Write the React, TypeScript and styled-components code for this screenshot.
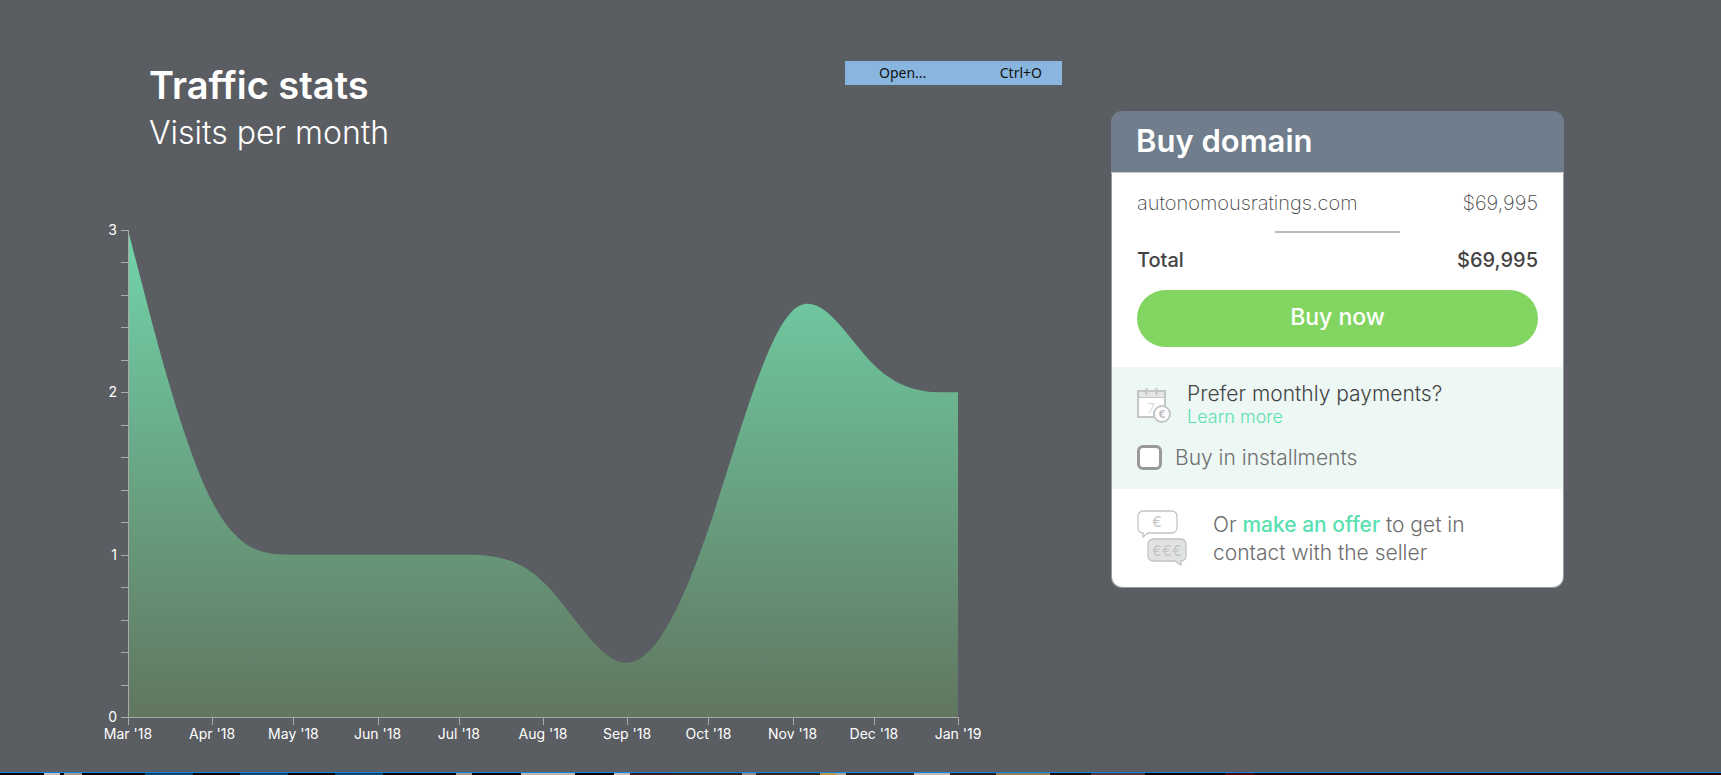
import React from "react";
import styled, { createGlobalStyle } from "styled-components";

const GlobalStyle = createGlobalStyle`
  *, *::before, *::after { box-sizing: border-box; }
  body {
    margin: 0;
    background: #5a5d61;
    color: #fff;
    font-family: Inter, "Open Sans", sans-serif;
  }
`;

const Page = styled.div`
  min-height: 100vh;
  display: flex;
  flex-direction: column;
`;

const Main = styled.main`
  display: grid;
  grid-template-columns: minmax(0, 1fr) 453px;
  column-gap: 49px;
  align-items: start;
  padding: 61px 157px 0 104px;
`;

const Stats = styled.section`
  display: flex;
  flex-direction: column;
  gap: 58px;
`;

const StatsHeader = styled.header`
  display: flex;
  align-items: flex-start;
  justify-content: space-between;
  padding-left: 45px;
`;

const Title = styled.h1`
  margin: 0;
  font-size: 38px;
  line-height: 48px;
  font-weight: 600;
`;

const Subtitle = styled.p`
  margin: 0;
  font-size: 32px;
  line-height: 48px;
  font-weight: 300;
`;

const MenuItem = styled.button`
  display: flex;
  align-items: center;
  justify-content: space-between;
  width: 217px;
  height: 24px;
  padding: 0 20px 0 34px;
  border: 0;
  background: #88b6de;
  color: #111;
  font: 14px/24px "Noto Sans", "Open Sans", sans-serif;
`;

const Shortcut = styled.kbd`
  font: inherit;
`;

const ChartSvg = styled.svg`
  display: block;
  width: 100%;
  height: auto;
`;

const AxisLine = styled.path`
  fill: none;
  stroke: #aaa;
  stroke-width: 1;
  shape-rendering: crispEdges;
`;

const AxisLabel = styled.text`
  fill: #fff;
  font-size: 14px;
`;

const Card = styled.aside`
  margin-top: 50px;
  border-radius: 11px;
  color: #444;
`;

const CardHeader = styled.h2`
  margin: 0;
  padding: 0 25px 2px;
  border-bottom: 1px solid #c9cbc8;
  border-radius: 11px 11px 0 0;
  background: #707d8c;
  color: #fff;
  font-size: 31px;
  line-height: 59px;
  font-weight: 600;
`;

const CardBody = styled.div`
  border: 1px solid #97999b;
  border-top: 0;
  border-radius: 0 0 11px 11px;
  background: #fff;
`;

const Summary = styled.div`
  padding: 14px 25px 20px;
`;

const PriceRow = styled.div<{ $strong?: boolean }>`
  display: flex;
  align-items: center;
  justify-content: space-between;
  font-size: 20px;
  line-height: ${(p) => (p.$strong ? 28 : 32)}px;
  font-weight: ${(p) => (p.$strong ? 500 : 200)};
`;

const Divider = styled.hr`
  width: 125px;
  height: 2px;
  margin: 12px auto 13px;
  border: 0;
  background: #bbb;
`;

const BuyButton = styled.button`
  display: block;
  width: 100%;
  height: 57px;
  margin-top: 16px;
  padding: 0 0 2px;
  border: 0;
  border-radius: 29px;
  background: #83d562;
  color: #fff;
  font: 500 23px/55px Inter, sans-serif;
`;

const Installments = styled.div`
  display: flex;
  flex-direction: column;
  gap: 17px;
  padding: 15px 25px 19px;
  background: #edf7f4;
`;

const Prefer = styled.div`
  display: flex;
  align-items: center;
  gap: 16px;
`;

const PreferText = styled.div`
  font-size: 21px;
  line-height: 23px;
  font-weight: 300;
`;

const Link = styled.a<{ $strong?: boolean }>`
  color: #5adfb0;
  text-decoration: none;
  font-weight: ${(p) => (p.$strong ? 500 : 300)};
`;

const LearnMore = styled(Link)`
  display: block;
  font-size: 18px;
`;

const CheckLabel = styled.label`
  display: flex;
  align-items: center;
  gap: 13px;
  color: #707070;
  font-size: 21px;
  line-height: 25px;
  font-weight: 300;
`;

const Checkbox = styled.input`
  appearance: none;
  width: 25px;
  height: 25px;
  margin: 0;
  border: 3px solid #999;
  border-radius: 6px;
  background: #fff;
`;

const Offer = styled.div`
  display: flex;
  align-items: center;
  gap: 26px;
  padding: 21px 25px 20px;
  color: #6c6c6c;
`;

const OfferText = styled.p`
  margin: 0;
  font-size: 21px;
  line-height: 28px;
  font-weight: 300;
`;

const Strip = styled.footer`
  height: 3px;
  margin-top: auto;
  border-top: 1px solid #1a80d8;
  background: linear-gradient(
    90deg,
    #08090c 0 44px, #b9bec8 44px 60px, #08090c 60px 64px, #999 64px 82px,
    #08090c 82px 145px, #0f4873 145px 193px, #08090c 193px 240px,
    #0f4873 240px 288px, #08090c 288px 335px, #0f4873 335px 383px,
    #08090c 383px 456px, #999 456px 472px, #08090c 472px 521px,
    #b4b6b8 521px 575px, #08090c 575px 614px, #b9bec8 614px 630px,
    #33202a 630px 672px, #29292c 672px 742px, #8d8f92 742px 756px,
    #29292c 756px 820px, #b79a4a 820px 836px, #a7a7a7 836px 846px,
    #232429 846px 914px, #b5bcc0 914px 950px, #232429 950px 996px,
    #8b8260 996px 1050px, #151316 1050px 1091px, #4f3a45 1091px 1145px,
    #090306 1145px 1225px, #4a0810 1225px 1255px, #1d050c 1255px
  );
`;

const PLOT = { left: 24, right: 854, top: 15, bottom: 502 };
const Y_MAX = 3;

const months = [
  { label: "Mar '18", day: 0, visits: 3 },
  { label: "Apr '18", day: 31, visits: 1 },
  { label: "May '18", day: 61, visits: 1 },
  { label: "Jun '18", day: 92, visits: 1 },
  { label: "Jul '18", day: 122, visits: 1 },
  { label: "Aug '18", day: 153, visits: 1 },
  { label: "Sep '18", day: 184, visits: 0 },
  { label: "Oct '18", day: 214, visits: 1 },
  { label: "Nov '18", day: 245, visits: 3 },
  { label: "Dec '18", day: 275, visits: 2 },
  { label: "Jan '19", day: 306, visits: 2 },
];

const xOf = (day: number) => PLOT.left + (day / 306) * (PLOT.right - PLOT.left);
const yOf = (v: number) => PLOT.bottom - (v / Y_MAX) * (PLOT.bottom - PLOT.top);

type Point = [number, number];

/** Cubic B-spline through the end points, smoothing the ones between. */
function basisCurve(points: Point[]): string {
  const first = points[0];
  const last = points[points.length - 1];
  const p = [first, ...points, last, last];
  const mix = (a: Point, b: Point, wa: number, wb: number) =>
    [0, 1].map((i) => ((a[i] * wa + b[i] * wb) / (wa + wb)).toFixed(2)).join(",");
  let d = `M${first.join(",")}`;
  for (let i = 1; i < p.length - 1; i++) {
    const [a, b, c] = [p[i - 1], p[i], p[i + 1]];
    const end = [0, 1].map((k) => ((a[k] + 4 * b[k] + c[k]) / 6).toFixed(2)).join(",");
    d += i === 1 ? `L${end}` : `C${mix(a, b, 2, 1)} ${mix(a, b, 1, 2)} ${end}`;
  }
  return d;
}

function TrafficChart() {
  const line = basisCurve(months.map((m): Point => [xOf(m.day), yOf(m.visits)]));
  const ticks = Array.from({ length: 16 }, (_, i) => i / 5);
  return (
    <ChartSvg viewBox="0 0 958 530" role="img" aria-label="Visits per month">
      <defs>
        <linearGradient id="visits" x1="0" y1="0" x2="0" y2="1">
          <stop offset="0" stopColor="#71d5aa" />
          <stop offset="1" stopColor="#61765f" />
        </linearGradient>
      </defs>
      <path d={`${line}L${PLOT.right},${PLOT.bottom}L${PLOT.left},${PLOT.bottom}Z`} fill="url(#visits)" />
      <AxisLine d={`M${PLOT.left + 0.5},${PLOT.top}V${PLOT.bottom + 0.5}H${PLOT.right}`} />
      {ticks.map((t) => (
        <AxisLine key={t} d={`M${PLOT.left - 7},${Math.round(yOf(t)) + 0.5}h7`} />
      ))}
      {[0, 1, 2, 3].map((v) => (
        <AxisLabel key={v} x={PLOT.left - 11} y={yOf(v) + 5} textAnchor="end">
          {v}
        </AxisLabel>
      ))}
      {months.map((m) => (
        <React.Fragment key={m.label}>
          <AxisLine d={`M${Math.round(xOf(m.day)) + 0.5},${PLOT.bottom}v8`} />
          <AxisLabel x={xOf(m.day)} y={PLOT.bottom + 22} textAnchor="middle">
            {m.label}
          </AxisLabel>
        </React.Fragment>
      ))}
    </ChartSvg>
  );
}

function CalendarIcon() {
  return (
    <svg width="34" height="36" viewBox="0 0 34 36" fill="none" stroke="#c4c6c5" strokeWidth="2" aria-hidden="true">
      <rect x="1" y="4" width="27" height="26" fill="#fff" />
      <rect x="2" y="5" width="25" height="5" fill="#e4e7e6" stroke="none" />
      <path d="M1 10.500H28" strokeWidth="1" />
      <path d="M9.500 1v7M19.500 1v7" />
      <text x="10" y="26" fontSize="14" fill="#ddd" stroke="none" fontFamily="Lato">7</text>
      <circle cx="25" cy="27" r="8" fill="#fff" />
      <text x="25" y="31" fontSize="11" fontWeight="600" fill="#b8baba" stroke="none" textAnchor="middle">€</text>
    </svg>
  );
}

function OfferIcon() {
  return (
    <svg width="50" height="57" viewBox="0 0 50 57" fill="none" stroke="#c2c4c3" strokeWidth="1.3" aria-hidden="true">
      <path fill="#fff" d="M6 1H35a5 5 0 0 1 5 5V18a5 5 0 0 1-5 5H11L6 27V23a5 5 0 0 1-5-5V6a5 5 0 0 1 5-5Z" />
      <path fill="#e1e3e2" d="M16 29H44a5 5 0 0 1 5 5V46a5 5 0 0 1-5 5V55L38 51H16a5 5 0 0 1-5-5V34a5 5 0 0 1 5-5Z" />
      <g fontSize="14" fill="#c2c4c3" stroke="none" textAnchor="middle">
        <text x="20" y="17">€</text>
        <text x="20" y="46">€</text>
        <text x="30" y="46">€</text>
        <text x="40" y="46">€</text>
      </g>
    </svg>
  );
}

export default function App() {
  return (
    <Page>
      <GlobalStyle />
      <Main>
        <Stats>
          <StatsHeader>
            <div>
              <Title>Traffic stats</Title>
              <Subtitle>Visits per month</Subtitle>
            </div>
            <MenuItem type="button">
              <span>Open...</span>
              <Shortcut>Ctrl+O</Shortcut>
            </MenuItem>
          </StatsHeader>
          <TrafficChart />
        </Stats>
        <Card>
          <CardHeader>Buy domain</CardHeader>
          <CardBody>
            <Summary>
              <PriceRow>
                <span>autonomousratings.com</span>
                <span>$69,995</span>
              </PriceRow>
              <Divider />
              <PriceRow $strong>
                <span>Total</span>
                <span>$69,995</span>
              </PriceRow>
              <BuyButton type="button">Buy now</BuyButton>
            </Summary>
            <Installments>
              <Prefer>
                <CalendarIcon />
                <PreferText>
                  Prefer monthly payments?
                  <LearnMore href="#learn-more">Learn more</LearnMore>
                </PreferText>
              </Prefer>
              <CheckLabel>
                <Checkbox type="checkbox" name="installments" />
                Buy in installments
              </CheckLabel>
            </Installments>
            <Offer>
              <OfferIcon />
              <OfferText>
                Or <Link $strong href="#offer">make an offer</Link> to get in
                <br />
                contact with the seller
              </OfferText>
            </Offer>
          </CardBody>
        </Card>
      </Main>
      <Strip />
    </Page>
  );
}
